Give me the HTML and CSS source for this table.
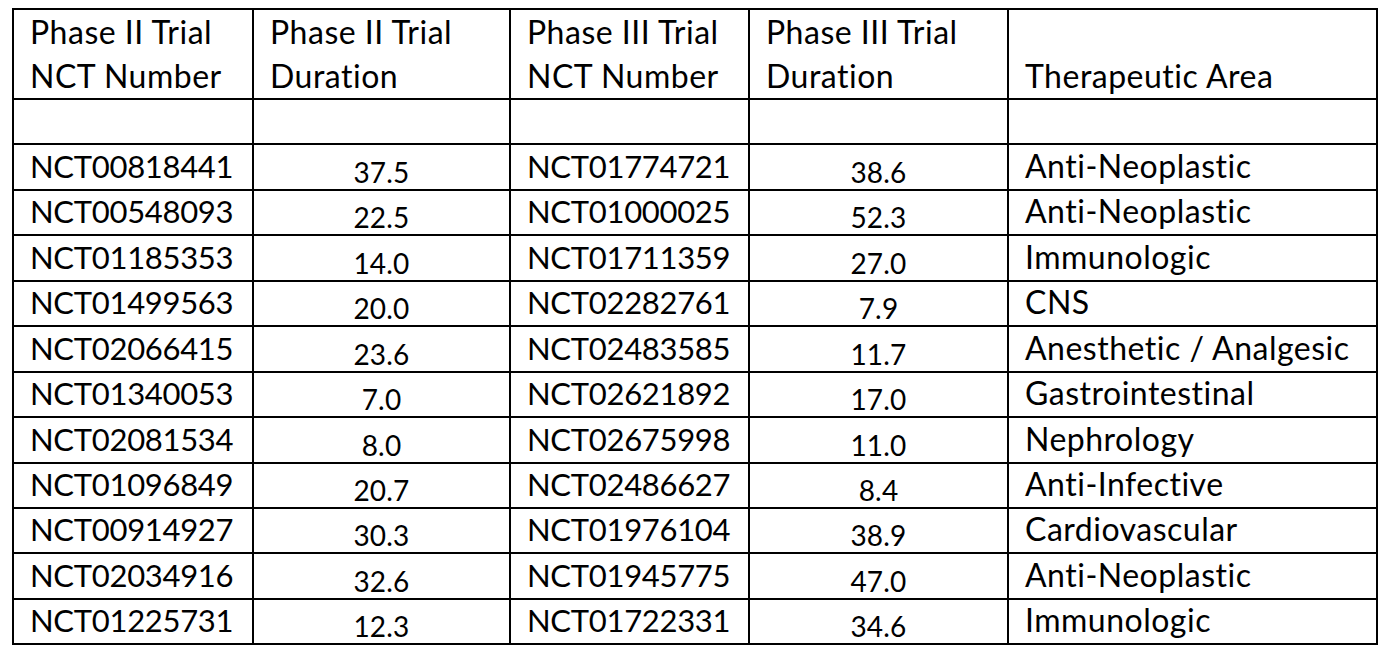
FILE: index.html
```html
<!DOCTYPE html>
<html lang="en">
<head>
<meta charset="utf-8">
<title>Phase II / Phase III trials</title>
<link rel="stylesheet" href="styles.css">
</head>
<body>
<table class="trials">
  <colgroup>
    <col class="c1"><col class="c2"><col class="c3"><col class="c4"><col class="c5">
  </colgroup>
  <thead>
    <tr class="head">
      <th>Phase II Trial<br>NCT Number</th>
      <th>Phase II Trial<br>Duration</th>
      <th>Phase III Trial<br>NCT Number</th>
      <th>Phase III Trial<br>Duration</th>
      <th>Therapeutic Area</th>
    </tr>
  </thead>
  <tbody>
    <tr class="blank"><td></td><td></td><td></td><td></td><td></td></tr>
    <tr><td class="id">NCT00818441</td><td class="num">37.5</td><td class="id">NCT01774721</td><td class="num">38.6</td><td>Anti-Neoplastic</td></tr>
    <tr><td class="id">NCT00548093</td><td class="num">22.5</td><td class="id">NCT01000025</td><td class="num">52.3</td><td>Anti-Neoplastic</td></tr>
    <tr><td class="id">NCT01185353</td><td class="num">14.0</td><td class="id">NCT01711359</td><td class="num">27.0</td><td>Immunologic</td></tr>
    <tr><td class="id">NCT01499563</td><td class="num">20.0</td><td class="id">NCT02282761</td><td class="num">7.9</td><td>CNS</td></tr>
    <tr><td class="id">NCT02066415</td><td class="num">23.6</td><td class="id">NCT02483585</td><td class="num">11.7</td><td>Anesthetic / Analgesic</td></tr>
    <tr><td class="id">NCT01340053</td><td class="num">7.0</td><td class="id">NCT02621892</td><td class="num">17.0</td><td>Gastrointestinal</td></tr>
    <tr><td class="id">NCT02081534</td><td class="num">8.0</td><td class="id">NCT02675998</td><td class="num">11.0</td><td>Nephrology</td></tr>
    <tr><td class="id">NCT01096849</td><td class="num">20.7</td><td class="id">NCT02486627</td><td class="num">8.4</td><td>Anti-Infective</td></tr>
    <tr><td class="id">NCT00914927</td><td class="num">30.3</td><td class="id">NCT01976104</td><td class="num">38.9</td><td>Cardiovascular</td></tr>
    <tr><td class="id">NCT02034916</td><td class="num">32.6</td><td class="id">NCT01945775</td><td class="num">47.0</td><td>Anti-Neoplastic</td></tr>
    <tr><td class="id">NCT01225731</td><td class="num">12.3</td><td class="id">NCT01722331</td><td class="num">34.6</td><td>Immunologic</td></tr>
  </tbody>
</table>
</body>
</html>
```

FILE: styles.css
```css
html, body {
  margin: 0;
  padding: 0;
  background: #ffffff;
}

body {
  padding: 8px 0 0 12px;
  font-family: "Lato", "Open Sans", sans-serif;
  color: #000000;
}

.trials {
  table-layout: fixed;
  width: 1366px;
  border-collapse: separate;
  border-spacing: 0;
  border-top: 2px solid #000;
  border-left: 2px solid #000;
}

.c1 { width: 240px; }
.c2 { width: 257px; }
.c3 { width: 239px; }
.c4 { width: 259px; }
.c5 { width: 369px; }

.trials th,
.trials td {
  box-sizing: border-box;
  border-right: 2px solid #000;
  border-bottom: 2px solid #000;
  padding: 0 0 4px 16px;
  font-size: 32px;
  letter-spacing: 0.5px;
  font-weight: 400;
  line-height: 38px;
  text-align: left;
  vertical-align: bottom;
  white-space: nowrap;
}

.head th {
  height: 90px;
  padding-bottom: 0;
  line-height: 44px;
}

.blank td {
  height: 44px;
  padding-bottom: 0;
}

.trials tbody td {
  height: 45.45px;
}

.trials td.id {
  font-size: 31px;
  letter-spacing: -0.3px;
}

.trials td.num {
  text-align: center;
  padding: 0;
  font-size: 28px;
  letter-spacing: 0.2px;
  line-height: 34px;
}
```
